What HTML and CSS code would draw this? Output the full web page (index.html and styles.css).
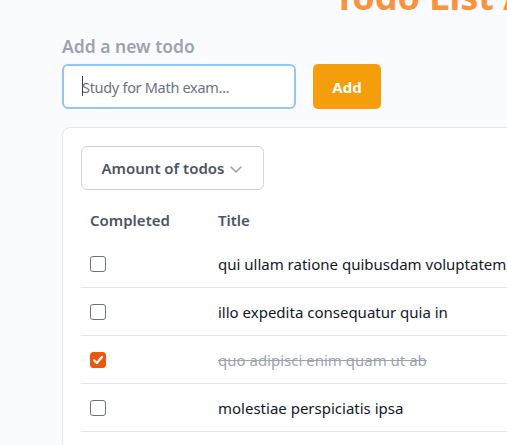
FILE: index.html
```html
<!DOCTYPE html>
<html>
<head>
<meta charset="utf-8">
<link rel="stylesheet" href="styles.css">
</head>
<body>
<div class="page">
  <h1 class="title">Todo List App</h1>
  <div class="content">
    <label class="label" for="new">Add a new todo</label>
    <div class="add-row">
      <div class="input"><span class="caret"></span><span class="placeholder">Study for Math exam...</span></div>
      <button class="add-btn">Add</button>
    </div>
    <div class="card">
      <button class="dropdown">Amount of todos
        <svg class="chev" width="14" height="14" viewBox="0 0 14 14"><path d="M2 5 L7 10 L12 5" fill="none" stroke="#9ca3af" stroke-width="1.5" stroke-linecap="round" stroke-linejoin="round"/></svg>
      </button>
      <table class="table">
        <thead>
          <tr><th class="c1">Completed</th><th>Title</th></tr>
        </thead>
        <tbody>
          <tr><td class="c1"><span class="cb"></span></td><td>qui ullam ratione quibusdam voluptatem quia omnis</td></tr>
          <tr><td class="c1"><span class="cb"></span></td><td>illo expedita consequatur quia in</td></tr>
          <tr><td class="c1"><span class="cb checked"><svg width="16" height="16" viewBox="0 0 16 16"><path d="M4 8.3 L6.8 11 L12 5" fill="none" stroke="#fff" stroke-width="2.2" stroke-linecap="round" stroke-linejoin="round"/></svg></span></td><td class="done">quo adipisci enim quam ut ab</td></tr>
          <tr><td class="c1"><span class="cb"></span></td><td>molestiae perspiciatis ipsa</td></tr>
          <tr><td class="c1"><span class="cb"></span></td><td>illo est ratione doloremque quia maiores aut</td></tr>
        </tbody>
      </table>
    </div>
  </div>
</div>
</body>
</html>
```
FILE: styles.css
```css
html, body {
  margin: 0;
  padding: 0;
  background: #fafbff;
  overflow: hidden;
}
body {
  font-family: "Noto Sans", "Open Sans", sans-serif;
  width: 507px;
  height: 445px;
}
.page {
  width: 900px;
}
.title {
  margin: -23px 0 0 334px;
  font-size: 36px;
  line-height: 40px;
  font-weight: 700;
  color: #fb923c;
  white-space: nowrap;
}
.content {
  padding: 17px 0 0 62px;
}
.label {
  display: block;
  font-size: 17.5px;
  font-weight: 600;
  color: #9ca3af;
  line-height: 24px;
}
.add-row {
  display: flex;
  align-items: center;
  gap: 17px;
  margin-top: 6px;
}
.input {
  box-sizing: border-box;
  width: 234px;
  height: 45px;
  border: 2px solid #93c5fd;
  border-radius: 6px;
  background: #fff;
  display: flex;
  align-items: center;
  padding-left: 18px;
  position: relative;
}
.caret {
  width: 1px;
  height: 20px;
  background: #374151;
  position: absolute;
  left: 18px;
  top: 10px;
}
.placeholder {
  font-size: 14.5px;
  letter-spacing: -0.3px;
  color: #6b7280;
}
.add-btn {
  width: 68px;
  height: 45px;
  border: none;
  border-radius: 5px;
  background: #f59e0b;
  color: #fff;
  font-family: inherit;
  font-size: 15px;
  font-weight: 700;
}
.card {
  margin-top: 18px;
  width: 600px;
  background: #fff;
  border: 1px solid #e5e7eb;
  border-radius: 8px;
  padding: 18px 0 0 18px;
}
.dropdown {
  box-sizing: border-box;
  width: 183px;
  height: 44px;
  border: 1px solid #d1d5db;
  border-radius: 6px;
  background: #fff;
  font-family: inherit;
  font-size: 15px;
  font-weight: 600;
  color: #4b5563;
  display: flex;
  align-items: center;
  justify-content: center;
  gap: 5px;
  padding: 0;
}
.chev {
  margin-top: 1px;
}
.table {
  margin-top: 10px;
  border-collapse: collapse;
  width: 560px;
}
th {
  text-align: left;
  font-size: 15px;
  font-weight: 600;
  color: #4b5563;
  height: 40px;
  padding: 0 9px;
  white-space: nowrap;
}
th.c1, td.c1 {
  width: 110px;
}
td {
  height: 47px;
  padding: 0 9px;
  border-bottom: 1px solid #e5e7eb;
  font-size: 15px;
  color: #111827;
  white-space: nowrap;
}
td.c1 {
  line-height: 0;
}
.cb {
  display: inline-block;
  box-sizing: border-box;
  width: 16px;
  height: 16px;
  border: 1px solid #6b7280;
  border-radius: 3px;
  background: #fff;
}
.cb.checked {
  background: #ea580c;
  border-color: #ea580c;
}
.cb.checked svg {
  margin: -1px 0 0 -1px;
  display: block;
}
.done {
  color: #9ca3af;
  text-decoration: line-through;
}
```
